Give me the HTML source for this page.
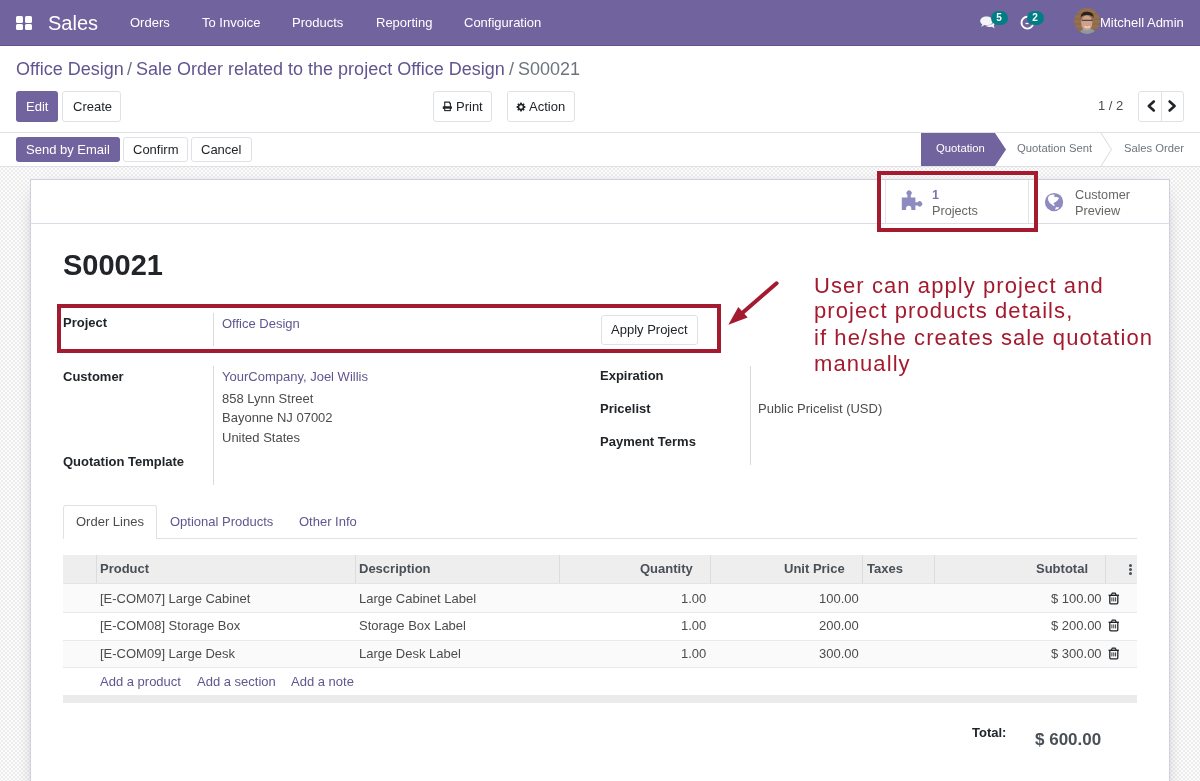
<!DOCTYPE html>
<html><head><meta charset="utf-8"><style>
html,body{margin:0;padding:0;width:1200px;height:781px;overflow:hidden;background:#fff;position:relative}
body{font-family:"Liberation Sans",sans-serif}
.t{position:absolute;line-height:1;white-space:pre;will-change:transform}
</style></head><body>
<div style="position:absolute;left:0px;top:0px;width:1200px;height:45px;background:#71639e"></div>
<div style="position:absolute;left:0px;top:45px;width:1200px;height:1px;background:#5f538a"></div>
<div style="position:absolute;left:16px;top:16.3px;width:7px;height:6.3px;background:#fff;border-radius:1.5px"></div>
<div style="position:absolute;left:24.7px;top:16.3px;width:7px;height:6.3px;background:#fff;border-radius:1.5px"></div>
<div style="position:absolute;left:16px;top:23.9px;width:7px;height:6.3px;background:#fff;border-radius:1.5px"></div>
<div style="position:absolute;left:24.7px;top:23.9px;width:7px;height:6.3px;background:#fff;border-radius:1.5px"></div>
<div class="t" style="left:48.00px;top:12.57px;font-size:20px;font-weight:400;color:#fff;">Sales</div>
<div class="t" style="left:130.00px;top:16.00px;font-size:13px;font-weight:400;color:#fff;">Orders</div>
<div class="t" style="left:202.00px;top:16.00px;font-size:13px;font-weight:400;color:#fff;">To Invoice</div>
<div class="t" style="left:292.00px;top:16.00px;font-size:13px;font-weight:400;color:#fff;">Products</div>
<div class="t" style="left:375.50px;top:16.00px;font-size:13px;font-weight:400;color:#fff;">Reporting</div>
<div class="t" style="left:464.00px;top:16.00px;font-size:13px;font-weight:400;color:#fff;">Configuration</div>
<div class="t" style="left:1099.60px;top:16.00px;font-size:13px;font-weight:400;color:#fff;">Mitchell Admin</div>
<div class="t" style="left:16.00px;top:59.76px;font-size:18px;font-weight:400;color:#62558f;">Office Design</div>
<div class="t" style="left:127.00px;top:59.76px;font-size:18px;font-weight:400;color:#6c757d;">/</div>
<div class="t" style="left:136.25px;top:59.76px;font-size:18px;font-weight:400;color:#62558f;">Sale Order related to the project Office Design</div>
<div class="t" style="left:508.50px;top:59.76px;font-size:18px;font-weight:400;color:#6c757d;">/</div>
<div class="t" style="left:517.50px;top:59.76px;font-size:18px;font-weight:400;color:#6c757d;">S00021</div>
<div style="position:absolute;left:16px;top:91px;width:42px;height:31px;background:#71639e;border-radius:3px"></div>
<div class="t" style="left:25.70px;top:100.25px;font-size:13px;font-weight:400;color:#fff;">Edit</div>
<div style="position:absolute;left:62px;top:91px;width:59px;height:31px;box-sizing:border-box;background:#fff;border:1px solid #dee2e6;border-radius:3px"></div>
<div class="t" style="left:72.50px;top:100.25px;font-size:13px;font-weight:400;color:#212529;">Create</div>
<div style="position:absolute;left:433px;top:91px;width:59px;height:31px;box-sizing:border-box;background:#fff;border:1px solid #dee2e6;border-radius:3px"></div>
<div class="t" style="left:456.00px;top:100.25px;font-size:13px;font-weight:400;color:#212529;">Print</div>
<div style="position:absolute;left:507px;top:91px;width:68px;height:31px;box-sizing:border-box;background:#fff;border:1px solid #dee2e6;border-radius:3px"></div>
<div class="t" style="left:529.40px;top:100.25px;font-size:13px;font-weight:400;color:#212529;">Action</div>
<div class="t" style="left:1098.40px;top:99.00px;font-size:13px;font-weight:400;color:#4c4c4c;">1 / 2</div>
<div style="position:absolute;left:1138px;top:91px;width:46px;height:31px;box-sizing:border-box;border:1px solid #dee2e6;border-radius:3px"></div>
<div style="position:absolute;left:1161px;top:91px;width:1px;height:31px;background:#dee2e6"></div>
<div style="position:absolute;left:0px;top:132px;width:1200px;height:1px;background:#dee2e6"></div>
<div style="position:absolute;left:16px;top:137px;width:104px;height:25px;background:#71639e;border-radius:3px"></div>
<div class="t" style="left:26.25px;top:143.25px;font-size:13px;font-weight:400;color:#fff;">Send by Email</div>
<div style="position:absolute;left:123px;top:137px;width:65px;height:25px;box-sizing:border-box;background:#fff;border:1px solid #dee2e6;border-radius:3px"></div>
<div class="t" style="left:133.00px;top:143.25px;font-size:13px;font-weight:400;color:#212529;">Confirm</div>
<div style="position:absolute;left:191px;top:137px;width:61px;height:25px;box-sizing:border-box;background:#fff;border:1px solid #dee2e6;border-radius:3px"></div>
<div class="t" style="left:201.30px;top:143.25px;font-size:13px;font-weight:400;color:#212529;">Cancel</div>
<div style="position:absolute;left:0px;top:166px;width:1200px;height:1px;background:#dee2e6"></div>
<div style="position:absolute;left:0px;top:167px;width:1200px;height:614px;background-color:#fcfcfc;background-image:conic-gradient(#ededed 25%,transparent 0 50%,#ededed 0 75%,transparent 0);background-size:4px 4px;background-position:3px 1px"></div>
<svg style="position:absolute;left:0;top:0" width="1200" height="781"><polygon points="921,133 995,133 1006,149.5 995,166 921,166" fill="#71639e"/><polyline points="1101,133 1111.5,149.5 1101,166" fill="none" stroke="#d6d9dd" stroke-width="1"/></svg>
<div class="t" style="left:935.70px;top:142.68px;font-size:11.25px;font-weight:400;color:#fff;">Quotation</div>
<div class="t" style="left:1017.00px;top:142.68px;font-size:11.25px;font-weight:400;color:#6c757d;">Quotation Sent</div>
<div class="t" style="left:1123.90px;top:142.68px;font-size:11.25px;font-weight:400;color:#6c757d;">Sales Order</div>
<div style="position:absolute;left:30px;top:179px;width:1140px;height:620px;box-sizing:border-box;background:#fff;border:1px solid #d0cfdc;box-shadow:0 5px 20px -12px rgba(0,0,0,0.6)"></div>
<div style="position:absolute;left:31px;top:223px;width:1138px;height:1px;background:#dcdbe6"></div>
<div style="position:absolute;left:885px;top:180px;width:1px;height:43px;background:#e3e2ea"></div>
<div style="position:absolute;left:1028px;top:180px;width:1px;height:43px;background:#e3e2ea"></div>
<div class="t" style="left:932.00px;top:189.05px;font-size:12.7px;font-weight:700;color:#7c74ad;">1</div>
<div class="t" style="left:932.00px;top:204.65px;font-size:12.7px;font-weight:400;color:#666;">Projects</div>
<div class="t" style="left:1074.50px;top:188.85px;font-size:12.7px;font-weight:400;color:#666;">Customer</div>
<div class="t" style="left:1074.50px;top:204.65px;font-size:12.7px;font-weight:400;color:#666;">Preview</div>
<div class="t" style="left:63.20px;top:250.95px;font-size:29px;font-weight:700;color:#212529;">S00021</div>
<div class="t" style="left:63.00px;top:316.00px;font-size:13px;font-weight:700;color:#212529;">Project</div>
<div style="position:absolute;left:213px;top:313px;width:1px;height:33px;background:#dadada"></div>
<div class="t" style="left:221.60px;top:317.00px;font-size:13px;font-weight:400;color:#62558f;">Office Design</div>
<div style="position:absolute;left:601px;top:314.5px;width:97px;height:30px;box-sizing:border-box;background:#fff;border:1px solid #dee2e6;border-radius:3px"></div>
<div class="t" style="left:611.25px;top:323.25px;font-size:13px;font-weight:400;color:#212529;">Apply Project</div>
<div style="position:absolute;left:213px;top:366px;width:1px;height:119px;background:#dadada"></div>
<div class="t" style="left:63.00px;top:369.50px;font-size:13px;font-weight:700;color:#212529;">Customer</div>
<div class="t" style="left:63.00px;top:455.00px;font-size:13px;font-weight:700;color:#212529;">Quotation Template</div>
<div class="t" style="left:221.60px;top:370.00px;font-size:13px;font-weight:400;color:#62558f;">YourCompany, Joel Willis</div>
<div class="t" style="left:221.60px;top:392.00px;font-size:13px;font-weight:400;color:#4c4c4c;">858 Lynn Street</div>
<div class="t" style="left:221.60px;top:410.80px;font-size:13px;font-weight:400;color:#4c4c4c;">Bayonne NJ 07002</div>
<div class="t" style="left:221.60px;top:431.00px;font-size:13px;font-weight:400;color:#4c4c4c;">United States</div>
<div style="position:absolute;left:750px;top:366px;width:1px;height:99px;background:#dadada"></div>
<div class="t" style="left:600.00px;top:369.00px;font-size:13px;font-weight:700;color:#212529;">Expiration</div>
<div class="t" style="left:600.00px;top:402.00px;font-size:13px;font-weight:700;color:#212529;">Pricelist</div>
<div class="t" style="left:600.00px;top:435.00px;font-size:13px;font-weight:700;color:#212529;">Payment Terms</div>
<div class="t" style="left:758.30px;top:402.00px;font-size:13px;font-weight:400;color:#4c4c4c;">Public Pricelist (USD)</div>
<div style="position:absolute;left:63px;top:538px;width:1074px;height:1px;background:#dee2e6"></div>
<div style="position:absolute;left:63px;top:505px;width:94px;height:34px;box-sizing:border-box;background:#fff;border:1px solid #dee2e6;border-bottom:none;border-radius:3px 3px 0 0"></div>
<div class="t" style="left:75.60px;top:515.25px;font-size:13px;font-weight:400;color:#4c4c4c;">Order Lines</div>
<div class="t" style="left:170.00px;top:515.25px;font-size:13px;font-weight:400;color:#62558f;">Optional Products</div>
<div class="t" style="left:299.00px;top:515.25px;font-size:13px;font-weight:400;color:#62558f;">Other Info</div>
<div style="position:absolute;left:63px;top:555px;width:1074px;height:28px;background:#eeeeee"></div>
<div style="position:absolute;left:63px;top:583px;width:1074px;height:1px;background:#e2e4ea"></div>
<div style="position:absolute;left:96px;top:555px;width:1px;height:28px;background:#dcdcdc"></div>
<div style="position:absolute;left:355px;top:555px;width:1px;height:28px;background:#dcdcdc"></div>
<div style="position:absolute;left:559px;top:555px;width:1px;height:28px;background:#dcdcdc"></div>
<div style="position:absolute;left:710px;top:555px;width:1px;height:28px;background:#dcdcdc"></div>
<div style="position:absolute;left:862px;top:555px;width:1px;height:28px;background:#dcdcdc"></div>
<div style="position:absolute;left:934px;top:555px;width:1px;height:28px;background:#dcdcdc"></div>
<div style="position:absolute;left:1105px;top:555px;width:1px;height:28px;background:#dcdcdc"></div>
<div class="t" style="left:100.40px;top:562.25px;font-size:13px;font-weight:700;color:#495057;">Product</div>
<div class="t" style="left:359.20px;top:562.25px;font-size:13px;font-weight:700;color:#495057;">Description</div>
<div class="t" style="right:507.50px;top:562.25px;font-size:13px;font-weight:700;color:#495057;">Quantity</div>
<div class="t" style="right:355.50px;top:562.25px;font-size:13px;font-weight:700;color:#495057;">Unit Price</div>
<div class="t" style="left:867.00px;top:562.25px;font-size:13px;font-weight:700;color:#495057;">Taxes</div>
<div class="t" style="right:112.50px;top:562.25px;font-size:13px;font-weight:700;color:#495057;">Subtotal</div>
<div style="position:absolute;left:1129px;top:563.5px;width:3px;height:3px;background:#495057;border-radius:50%"></div>
<div style="position:absolute;left:1129px;top:567.5px;width:3px;height:3px;background:#495057;border-radius:50%"></div>
<div style="position:absolute;left:1129px;top:571.5px;width:3px;height:3px;background:#495057;border-radius:50%"></div>
<div style="position:absolute;left:63px;top:584px;width:1074px;height:28px;background:#fafafa"></div>
<div class="t" style="left:100.00px;top:592.00px;font-size:13px;font-weight:400;color:#4c4c4c;">[E-COM07] Large Cabinet</div>
<div class="t" style="left:358.60px;top:592.00px;font-size:13px;font-weight:400;color:#4c4c4c;">Large Cabinet Label</div>
<div class="t" style="right:493.75px;top:592.00px;font-size:13px;font-weight:400;color:#4c4c4c;">1.00</div>
<div class="t" style="right:341.40px;top:592.00px;font-size:13px;font-weight:400;color:#4c4c4c;">100.00</div>
<div class="t" style="right:98.80px;top:592.00px;font-size:13px;font-weight:400;color:#4c4c4c;">$ 100.00</div>
<svg style="position:absolute;left:1108px;top:591.8px" width="12" height="13" viewBox="0 0 12 13"><path d="M0.6 3.3h10.3" stroke="#212529" stroke-width="1.4"/><path d="M3.2 3.2L4.3 1.2h2.9l1.1 2" fill="none" stroke="#212529" stroke-width="1.2"/><path d="M1.8 3.9v6.9q0 1 1 1h6q1 0 1-1V3.9" fill="none" stroke="#212529" stroke-width="1.3"/><path d="M3.9 5.4v4M5.75 5.4v4M7.6 5.4v4" stroke="#212529" stroke-width="0.9"/></svg>
<div style="position:absolute;left:63px;top:612px;width:1074px;height:28px;background:#ffffff"></div>
<div class="t" style="left:100.00px;top:619.25px;font-size:13px;font-weight:400;color:#4c4c4c;">[E-COM08] Storage Box</div>
<div class="t" style="left:358.60px;top:619.25px;font-size:13px;font-weight:400;color:#4c4c4c;">Storage Box Label</div>
<div class="t" style="right:493.75px;top:619.25px;font-size:13px;font-weight:400;color:#4c4c4c;">1.00</div>
<div class="t" style="right:341.40px;top:619.25px;font-size:13px;font-weight:400;color:#4c4c4c;">200.00</div>
<div class="t" style="right:98.80px;top:619.25px;font-size:13px;font-weight:400;color:#4c4c4c;">$ 200.00</div>
<svg style="position:absolute;left:1108px;top:619.05px" width="12" height="13" viewBox="0 0 12 13"><path d="M0.6 3.3h10.3" stroke="#212529" stroke-width="1.4"/><path d="M3.2 3.2L4.3 1.2h2.9l1.1 2" fill="none" stroke="#212529" stroke-width="1.2"/><path d="M1.8 3.9v6.9q0 1 1 1h6q1 0 1-1V3.9" fill="none" stroke="#212529" stroke-width="1.3"/><path d="M3.9 5.4v4M5.75 5.4v4M7.6 5.4v4" stroke="#212529" stroke-width="0.9"/></svg>
<div style="position:absolute;left:63px;top:640px;width:1074px;height:27px;background:#fafafa"></div>
<div class="t" style="left:100.00px;top:647.00px;font-size:13px;font-weight:400;color:#4c4c4c;">[E-COM09] Large Desk</div>
<div class="t" style="left:358.60px;top:647.00px;font-size:13px;font-weight:400;color:#4c4c4c;">Large Desk Label</div>
<div class="t" style="right:493.75px;top:647.00px;font-size:13px;font-weight:400;color:#4c4c4c;">1.00</div>
<div class="t" style="right:341.40px;top:647.00px;font-size:13px;font-weight:400;color:#4c4c4c;">300.00</div>
<div class="t" style="right:98.80px;top:647.00px;font-size:13px;font-weight:400;color:#4c4c4c;">$ 300.00</div>
<svg style="position:absolute;left:1108px;top:646.8px" width="12" height="13" viewBox="0 0 12 13"><path d="M0.6 3.3h10.3" stroke="#212529" stroke-width="1.4"/><path d="M3.2 3.2L4.3 1.2h2.9l1.1 2" fill="none" stroke="#212529" stroke-width="1.2"/><path d="M1.8 3.9v6.9q0 1 1 1h6q1 0 1-1V3.9" fill="none" stroke="#212529" stroke-width="1.3"/><path d="M3.9 5.4v4M5.75 5.4v4M7.6 5.4v4" stroke="#212529" stroke-width="0.9"/></svg>
<div style="position:absolute;left:63px;top:612px;width:1074px;height:1px;background:#e6e9f0"></div>
<div style="position:absolute;left:63px;top:640px;width:1074px;height:1px;background:#e6e9f0"></div>
<div style="position:absolute;left:63px;top:667px;width:1074px;height:1px;background:#e6e9f0"></div>
<div class="t" style="left:100.00px;top:674.75px;font-size:13px;font-weight:400;color:#62558f;">Add a product</div>
<div class="t" style="left:196.50px;top:674.75px;font-size:13px;font-weight:400;color:#62558f;">Add a section</div>
<div class="t" style="left:291.25px;top:674.75px;font-size:13px;font-weight:400;color:#62558f;">Add a note</div>
<div style="position:absolute;left:63px;top:695px;width:1074px;height:7.5px;background:#ebebeb"></div>
<div class="t" style="right:193.20px;top:726.00px;font-size:13px;font-weight:700;color:#212529;">Total:</div>
<div class="t" style="right:98.50px;top:730.61px;font-size:17px;font-weight:700;color:#495057;">$ 600.00</div>
<div style="position:absolute;left:877px;top:171px;width:161px;height:61px;box-sizing:border-box;border:4px solid #a41a2e"></div>
<div style="position:absolute;left:57px;top:304px;width:664px;height:49.3px;box-sizing:border-box;border:4px solid #a41a2e"></div>
<div class="t" style="left:813.80px;top:274.88px;font-size:22px;font-weight:400;color:#a41a2e;letter-spacing:1.08px">User can apply project and</div>
<div class="t" style="left:813.80px;top:300.48px;font-size:22px;font-weight:400;color:#a41a2e;letter-spacing:1.08px">project products details,</div>
<div class="t" style="left:813.80px;top:326.98px;font-size:22px;font-weight:400;color:#a41a2e;letter-spacing:1.08px">if he/she creates sale quotation</div>
<div class="t" style="left:813.80px;top:352.68px;font-size:22px;font-weight:400;color:#a41a2e;letter-spacing:1.08px">manually</div>
<svg style="position:absolute;left:0;top:0" width="1200" height="781"><line x1="776.6" y1="283.3" x2="740" y2="315" stroke="#a41a2e" stroke-width="4" stroke-linecap="round"/><polygon points="728.3,324.7 738.3,306.9 747.7,317.6" fill="#a41a2e"/></svg>
<svg style="position:absolute;left:979px;top:15px" width="18" height="15" viewBox="0 0 18 15"><path d="M7.5 1.5C3.9 1.5 1.2 3.4 1.2 5.9c0 1.3.8 2.5 2.1 3.3L2.2 11.9l3.2-1.9c.7.2 1.4.3 2.1.3 3.6 0 6.3-1.9 6.3-4.4S11.1 1.5 7.5 1.5z" fill="#f4f3f8"/><path d="M15.3 9.2c.9-.7 1.4-1.6 1.4-2.6 0-.8-.3-1.5-.9-2.1.1 3-3.1 5.6-7.6 5.9-.5 0-1 0-1.5 0 .9.9 2.5 1.6 4.3 1.6.6 0 1.2-.1 1.8-.2l3 1.8-1-2.4z" fill="#f4f3f8"/></svg>
<svg style="position:absolute;left:1019px;top:14px" width="17" height="17" viewBox="0 0 17 17"><circle cx="8.4" cy="8.7" r="5.9" fill="none" stroke="#fff" stroke-width="1.9"/><path d="M6.5 9.5h3" stroke="#fff" stroke-width="1.2"/></svg>
<div style="position:absolute;left:991px;top:10.75px;width:16.5px;height:14.5px;background:#017e84;border-radius:8px"></div>
<div class="t" style="left:999.25px;top:13.23px;font-size:10px;font-weight:700;color:#fff;width:0;text-align:center;display:flex;justify-content:center">5</div>
<div style="position:absolute;left:1027px;top:10.75px;width:16.5px;height:14.5px;background:#017e84;border-radius:8px"></div>
<div class="t" style="left:1035.25px;top:13.23px;font-size:10px;font-weight:700;color:#fff;width:0;text-align:center;display:flex;justify-content:center">2</div>
<svg style="position:absolute;left:1074px;top:8px" width="26" height="26" viewBox="0 0 26 26"><defs><clipPath id="av"><circle cx="13" cy="13" r="12.9"/></clipPath></defs><g clip-path="url(#av)"><rect width="26" height="26" fill="#94704f"/><path d="M0 6h26M0 11h26M0 16h26M0 21h26" stroke="#7e5f43" stroke-width="0.8" opacity="0.7"/><ellipse cx="13.5" cy="24" rx="7" ry="4" fill="#8a9aa0"/><ellipse cx="12.8" cy="14.8" rx="5.6" ry="7.6" fill="#cfa08a"/><path d="M6.5 9.5Q7 3.5 13 3.8Q19.5 3.5 19.8 10Q18.5 7 13 7Q8 7 6.5 9.5z" fill="#2b211d"/><path d="M8 12.3h4M14 12.3h4.5M12 12.3h2" stroke="#3a2e2a" stroke-width="1"/><path d="M10.5 18.5q2.8 1.6 5.4 0" stroke="#f2e6e0" stroke-width="1.1" fill="none"/></g></svg>
<svg style="position:absolute;left:438px;top:96px" width="20" height="20" viewBox="0 0 20 20"><path d="M6.7 11V6.1h4.4l1.3 1.3V11" fill="#fff" stroke="#212529" stroke-width="1.1"/><path d="M11 5.6l1.9 1.9h-1.9z" fill="#212529"/><rect x="4.7" y="10.2" width="9.3" height="2.7" rx="0.8" fill="#212529"/><rect x="6.7" y="12.1" width="5.6" height="2.5" fill="#fff" stroke="#212529" stroke-width="1.1"/></svg>
<svg style="position:absolute;left:516.1px;top:101.9px" width="10" height="10" viewBox="-5 -5 10 10"><polygon points="-1.22,-2.74 -0.70,-4.44 0.70,-4.44 1.22,-2.74 1.08,-2.80 2.65,-3.64 3.64,-2.65 2.80,-1.08 2.74,-1.22 4.44,-0.70 4.44,0.70 2.74,1.22 2.80,1.08 3.64,2.65 2.65,3.64 1.08,2.80 1.22,2.74 0.70,4.44 -0.70,4.44 -1.22,2.74 -1.08,2.80 -2.65,3.64 -3.64,2.65 -2.80,1.08 -2.74,1.22 -4.44,0.70 -4.44,-0.70 -2.74,-1.22 -2.80,-1.08 -3.64,-2.65 -2.65,-3.64 -1.08,-2.80" fill="#212529"/><circle r="1.75" fill="#fff"/></svg>
<svg style="position:absolute;left:1140px;top:95px" width="44" height="22"><polyline points="13.8,6.5 8.8,11 13.8,15.5" fill="none" stroke="#212529" stroke-width="2.6" stroke-linecap="round" stroke-linejoin="round"/><polyline points="29.6,6.5 34.6,11 29.6,15.5" fill="none" stroke="#212529" stroke-width="2.6" stroke-linecap="round" stroke-linejoin="round"/></svg>
<svg style="position:absolute;left:900px;top:189px" width="24" height="24"><path d="M1.8 8.6h5.6V6.1a2.6 2.6 0 1 1 3.4 0v2.5h4.6v4.6h2.3a2.6 2.6 0 1 1 0 3.4h-2.3V21h-4.1v-1.7a2.6 2.6 0 0 0-5.2 0V21H1.8z" fill="#8e8bc0"/></svg>
<svg style="position:absolute;left:1042px;top:190px" width="24" height="24" viewBox="0 0 24 24"><circle cx="12.05" cy="12.05" r="9.15" fill="#8e8bc0"/><path d="M5.8 7.4L8 4.9l4.3-.3.3 1.4-.6.6 1 .7 1.2-.5 3 1.2-1.8 2.5-2.2 1.8-1.8.7 1.5 2.4-1.2.6-4-3.1-1.5-2.7z M13.8 17.2h3.4l-1.2 1.8-2.8.7z" fill="#fff"/></svg>
</body></html>
